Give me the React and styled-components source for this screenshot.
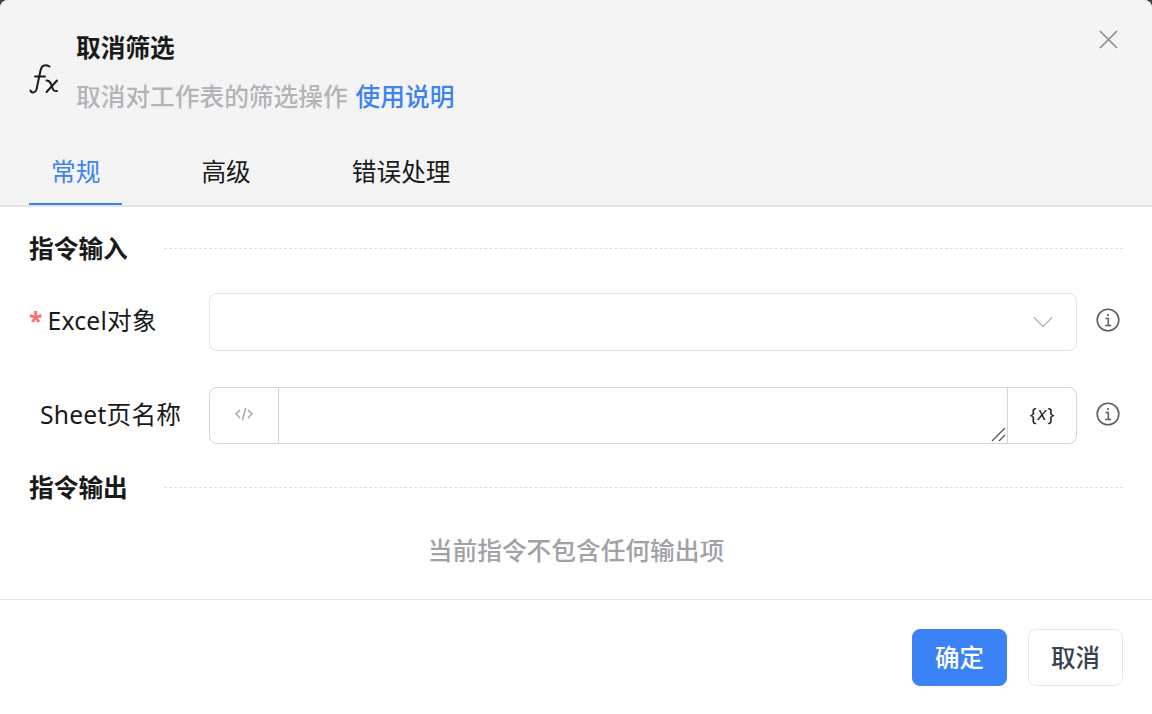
import React from 'react';
import styled, { createGlobalStyle } from 'styled-components';

const Global = createGlobalStyle`
  html, body {
    margin: 0;
    padding: 0;
    background: #3f3f46;
  }
  * {
    box-sizing: border-box;
  }
`;

const Modal = styled.div`
  width: 1152px;
  height: 714px;
  display: flex;
  flex-direction: column;
  background: #fff;
  border-radius: 8px 8px 0 0;
  overflow: hidden;
  font-family: 'Noto Sans', 'Noto Sans CJK SC', sans-serif;
  font-size: 24.7px;
  color: #1a1a1a;
`;

const Head = styled.div`
  height: 207px;
  flex: none;
  position: relative;
  background: #f4f4f5;
  border-bottom: 2px solid #e4e4e4;
  padding: 30px 29px 0;
`;

const TitleRow = styled.div`
  display: flex;
  align-items: center;
  gap: 16px;
`;

const Title = styled.div`
  font-weight: 700;
  line-height: 36px;
`;

const Desc = styled.div`
  line-height: 36px;
  margin-top: 13px;
  font-weight: 500;
  color: #b4b4b8;
`;

const Help = styled.span`
  color: #3b82f6;
  margin-left: 8px;
`;

const Close = styled.button`
  position: absolute;
  top: 28px;
  right: 33px;
  width: 22px;
  height: 22px;
  padding: 0;
  border: 0;
  background: none;
  color: #8d8d93;
`;

const Tabs = styled.div`
  display: flex;
  margin-top: 39px;
  gap: 57px;
`;

const Tab = styled.div`
  height: 51px;
  padding: 0 22px;
  line-height: 36px;
  color: ${p => (p.$active ? '#3b82f6' : '#1a1a1a')};
  border-bottom: 2px solid ${p => (p.$active ? '#3b82f6' : 'transparent')};
`;

const Body = styled.div`
  flex: 1;
  padding: 24px 29px 0;
`;

const Section = styled.div`
  display: flex;
  align-items: center;
  gap: 36px;
  height: 36px;
  margin-top: ${p => p.$top || 0}px;
`;

const SectionName = styled.div`
  font-weight: 700;
  line-height: 36px;
`;

const Dash = styled.div`
  flex: 1;
  margin-bottom: 2px;
  border-top: 1px dashed #e0e0e0;
`;

const Row = styled.div`
  display: flex;
  align-items: center;
  margin-top: ${p => p.$top}px;
`;

const Label = styled.div`
  width: 180px;
  flex: none;
  line-height: 36px;
  letter-spacing: 0.2px;
  margin-bottom: 2px;
  padding-left: ${p => p.$indent || 0}px;
`;

const Star = styled.span`
  color: #f87171;
  font-weight: 700;
  margin-right: 5px;
`;

const Select = styled.div`
  flex: 1;
  height: 58px;
  display: flex;
  align-items: center;
  justify-content: flex-end;
  padding-right: 23px;
  border: 1px solid #e4e4e7;
  border-radius: 8px;
  color: #b4b4b8;
`;

const Group = styled.div`
  flex: 1;
  height: 57px;
  display: flex;
  border: 1px solid #d4d4d8;
  border-radius: 8px;
`;

const Addon = styled.div`
  width: 68px;
  flex: none;
  display: flex;
  align-items: center;
  justify-content: center;
  color: ${p => p.$color};
  font-size: 18px;
  padding-bottom: 3px;
`;

const Area = styled.div`
  flex: 1;
  position: relative;
  border-left: 1px solid #d4d4d8;
  border-right: 1px solid #d4d4d8;
`;

const Grip = styled.svg`
  position: absolute;
  right: 1px;
  bottom: 1px;
`;

const Var = styled.i`
  font-family: 'Liberation Sans', sans-serif;
  padding: 0 1px;
`;

const Info = styled.div`
  width: 46px;
  flex: none;
  display: flex;
  justify-content: flex-end;
  padding-right: 3px;
  margin-bottom: 4px;
  color: #5f5f64;
`;

const Empty = styled.div`
  margin-top: 27px;
  text-align: center;
  line-height: 36px;
  font-weight: 500;
  color: #a1a1a6;
`;

const Foot = styled.div`
  height: 115px;
  flex: none;
  display: flex;
  justify-content: flex-end;
  gap: 21px;
  padding: 29px 29px 0;
  border-top: 1px solid #e4e4e7;
`;

const Button = styled.button`
  width: ${p => p.$w}px;
  height: 57px;
  border-radius: 8px;
  font-family: inherit;
  font-size: 24.5px;
  padding: 0 0 3px;
  font-weight: 500;
  color: ${p => (p.$primary ? '#fff' : '#374151')};
  background: ${p => (p.$primary ? '#3b82f6' : '#fff')};
  border: 1px solid ${p => (p.$primary ? '#3b82f6' : '#e5e7eb')};
`;

const Fx = styled.svg`
  flex: none;
  margin-top: 12px;
`;

const FxIcon = () => (
  <Fx width="31" height="32" viewBox="0 0 31 32" fill="none" stroke="#1a1a1a" strokeWidth="2" strokeLinecap="round">
    <path d="M1.500 27.500C2 30 6 30.500 7.500 26.500L11.500 7.500C12.500 2.500 16 .8 20.500 3.500" />
    <path d="M6 13.500H16" />
    <path d="M17.500 17.500C20 17.500 21 18.500 22 21L23.500 25C24.500 28 25.500 28.500 28 28" />
    <path d="M28 17.500L17.500 29" />
  </Fx>
);

const CloseIcon = () => (
  <svg width="22" height="22" viewBox="0 0 22 22" fill="none" stroke="currentColor" strokeWidth="1.7">
    <path d="M3 3l17 17M20 3L3 20" />
  </svg>
);

const Chevron = () => (
  <svg width="20" height="12" viewBox="0 0 20 12" fill="none" stroke="currentColor" strokeWidth="1.5">
    <path d="M1 1.500l9 9 9-9" />
  </svg>
);

const InfoIcon = () => (
  <svg width="24" height="24" viewBox="0 0 24 24" fill="none" stroke="currentColor" strokeWidth="1.600">
    <circle cx="12" cy="12" r="10.800" />
    <path d="M9.500 10.500H12.300V17.500M9.200 17.500h6" />
    <circle cx="12" cy="7" r="1.100" fill="currentColor" stroke="none" />
  </svg>
);

const CodeIcon = () => (
  <svg width="18" height="14" viewBox="0 0 18 14" fill="none" stroke="currentColor" strokeWidth="1.400">
    <path d="M5 3L1 7l4 4M13 3l4 4-4 4M10.500 1l-3 12" />
  </svg>
);

export default function App() {
  return (
    <>
      <Global />
      <Modal>
        <Head>
          <TitleRow>
            <FxIcon />
            <div>
              <Title>取消筛选</Title>
              <Desc>取消对工作表的筛选操作<Help>使用说明</Help></Desc>
            </div>
          </TitleRow>
          <Close><CloseIcon /></Close>
          <Tabs>
            <Tab $active>常规</Tab>
            <Tab>高级</Tab>
            <Tab>错误处理</Tab>
          </Tabs>
        </Head>
        <Body>
          <Section>
            <SectionName>指令输入</SectionName>
            <Dash />
          </Section>
          <Row $top={26}>
            <Label><Star>*</Star>Excel对象</Label>
            <Select><Chevron /></Select>
            <Info><InfoIcon /></Info>
          </Row>
          <Row $top={36}>
            <Label $indent={11}>Sheet页名称</Label>
            <Group>
              <Addon $color="#a1a1aa"><CodeIcon /></Addon>
              <Area>
                <Grip width="16" height="16" viewBox="0 0 16 16" fill="none" stroke="#555" strokeWidth="1.300">
                  <path d="M2 15L15 2M9 15l6-6" />
                </Grip>
              </Area>
              <Addon $color="#1a1a1a">{'{'}<Var>x</Var>{'}'}</Addon>
            </Group>
            <Info><InfoIcon /></Info>
          </Row>
          <Section $top={26}>
            <SectionName>指令输出</SectionName>
            <Dash />
          </Section>
          <Empty>当前指令不包含任何输出项</Empty>
        </Body>
        <Foot>
          <Button $primary $w={95}>确定</Button>
          <Button $w={95}>取消</Button>
        </Foot>
      </Modal>
    </>
  );
}
